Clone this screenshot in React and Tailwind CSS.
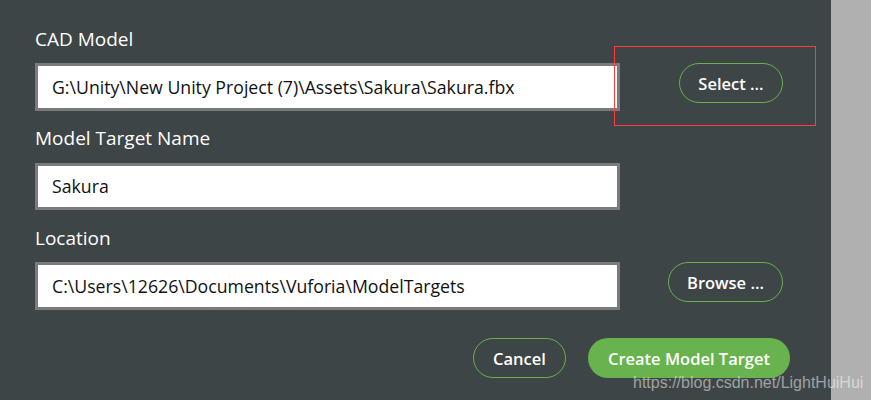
import React from "react";

const font = { fontFamily: '"Open Sans", "Noto Sans", sans-serif' };

function Field({ value, className = "" }) {
  return (
    <div
      className={`w-[585px] border-[3px] border-[#7b7b7b] bg-white flex items-center pl-[14px] text-[17.7px] text-[#111] ${className}`}
    >
      {value}
    </div>
  );
}

function OutlineBtn({ children, className = "" }) {
  return (
    <div
      className={`h-[40px] rounded-full border-[1.5px] border-[#6ab04c] flex items-center justify-center pt-[3px] text-white text-[16.5px] font-semibold ${className}`}
    >
      {children}
    </div>
  );
}

export default function App() {
  return (
    <div className="w-[871px] h-[400px] flex relative overflow-hidden" style={font}>
      <div className="w-[831px] h-full bg-[#3d4547] pl-[35px] pt-[27px] flex flex-col">
        <div className="h-[24px] leading-[24px] text-[19px] text-white">CAD Model</div>
        <div className="mt-[12px] w-[748px] flex items-start">
          <Field value="G:\Unity\New Unity Project (7)\Assets\Sakura\Sakura.fbx" className="h-[48px]" />
          <OutlineBtn className="ml-auto w-[104px]">Select ...</OutlineBtn>
        </div>
        <div className="mt-[15px] h-[24px] leading-[24px] text-[19px] text-white">Model Target Name</div>
        <div className="mt-[13px]">
          <Field value="Sakura" className="h-[47px]" />
        </div>
        <div className="mt-[16px] h-[24px] leading-[24px] text-[19px] text-white">Location</div>
        <div className="mt-[12px] w-[748px] flex items-start">
          <Field value="C:\Users\12626\Documents\Vuforia\ModelTargets" className="h-[48px]" />
          <OutlineBtn className="ml-auto w-[115px]">Browse ...</OutlineBtn>
        </div>
        <div className="mt-[28px] w-[755px] flex justify-end gap-[22px]">
          <OutlineBtn className="w-[93px]">Cancel</OutlineBtn>
          <div className="h-[40px] w-[202px] rounded-full bg-[#68b34d] flex items-center justify-center pt-[2px] text-white text-[16.5px] font-semibold">
            Create Model Target
          </div>
        </div>
      </div>
      <div className="flex-1 h-full bg-[#b0b0b0]" />
      <div className="absolute left-[614px] top-[46px] w-[202px] h-[80px] border border-[#ff3b3b]" />
      <div
        className="absolute left-[633px] top-[372px] text-[16px] leading-[22px] text-white/50 whitespace-nowrap"
        style={{ fontFamily: '"Liberation Sans", Arial, sans-serif' }}
      >
        https://blog.csdn.net/LightHuiHui
      </div>
    </div>
  );
}
